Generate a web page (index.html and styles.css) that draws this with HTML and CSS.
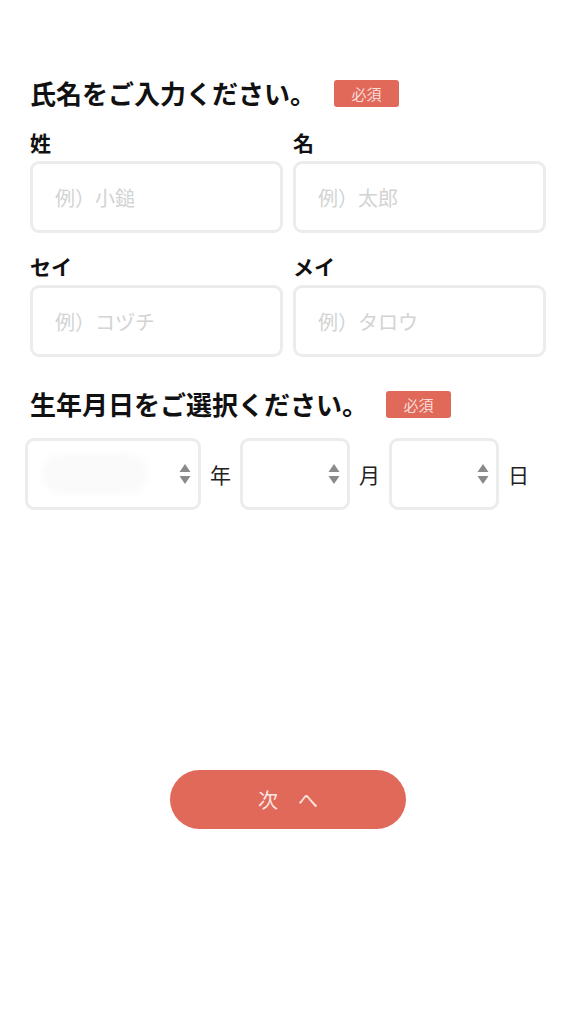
FILE: index.html
```html
<!DOCTYPE html>
<html lang="ja">
<head>
  <meta charset="UTF-8" />
  <meta name="viewport" content="width=device-width, initial-scale=1" />
  <title>お客様情報の入力</title>
  <link rel="stylesheet" href="styles.css">
</head>
<body>
  <main class="form">
    <div class="heading">
      <h2>氏名をご入力ください。</h2>
      <span class="badge">必須</span>
    </div>
    <div class="pair">
      <label class="field">
        <span class="label">姓</span>
        <input type="text" placeholder="例）小鎚" />
      </label>
      <label class="field">
        <span class="label">名</span>
        <input type="text" placeholder="例）太郎" />
      </label>
    </div>
    <div class="pair second">
      <label class="field">
        <span class="label">セイ</span>
        <input type="text" placeholder="例）コヅチ" />
      </label>
      <label class="field">
        <span class="label">メイ</span>
        <input type="text" placeholder="例）タロウ" />
      </label>
    </div>

    <div class="heading birth">
      <h2>生年月日をご選択ください。</h2>
      <span class="badge">必須</span>
    </div>
    <div class="date-row">
      <div class="select year">
        <span class="blank"></span>
        <svg class="arrows" width="12" height="22" viewBox="0 0 12 22"><path d="M6 1 L11.5 9 H0.5 Z" fill="#8a8a8a"/><path d="M6 21 L11.5 13 H0.5 Z" fill="#8a8a8a"/></svg>
      </div>
      <span class="unit">年</span>
      <div class="select">
        <svg class="arrows" width="12" height="22" viewBox="0 0 12 22"><path d="M6 1 L11.5 9 H0.5 Z" fill="#8a8a8a"/><path d="M6 21 L11.5 13 H0.5 Z" fill="#8a8a8a"/></svg>
      </div>
      <span class="unit">月</span>
      <div class="select">
        <svg class="arrows" width="12" height="22" viewBox="0 0 12 22"><path d="M6 1 L11.5 9 H0.5 Z" fill="#8a8a8a"/><path d="M6 21 L11.5 13 H0.5 Z" fill="#8a8a8a"/></svg>
      </div>
      <span class="unit">日</span>
    </div>

    <div class="actions">
      <button type="button" class="next">次　へ</button>
    </div>
  </main>
</body>
</html>
```

FILE: styles.css
```css
body {
  margin: 0;
  background: #fff;
  color: #111;
  font-family: "Noto Sans CJK JP", "Noto Sans", sans-serif;
}
.form {
  padding: 75px 30px 0 30px;
}
.heading {
  display: flex;
  align-items: center;
  height: 36px;
}
.heading h2 {
  margin: 0;
  font-size: 26px;
  font-weight: 700;
  line-height: 36px;
  letter-spacing: 0;
}
.badge {
  margin-left: 18px;
  width: 65px;
  height: 27px;
  border-radius: 3px;
  background: #e1695a;
  color: #f9dcd7;
  font-size: 15px;
  line-height: 27px;
  text-align: center;
}
.pair {
  display: grid;
  grid-template-columns: 253px 253px;
  column-gap: 10px;
  margin-top: 16px;
}
.pair.second {
  margin-top: 18px;
}
.field {
  display: flex;
  flex-direction: column;
}
.label {
  font-size: 21px;
  font-weight: 700;
  line-height: 30px;
  margin-bottom: 4px;
}
.field input {
  box-sizing: border-box;
  height: 72px;
  width: 100%;
  border: 3px solid #ececec;
  border-radius: 9px;
  padding: 0 0 0 22px;
  font-family: inherit;
  font-size: 20px;
  color: #333;
  outline: none;
}
.field input::placeholder {
  color: #d3d3d3;
}
.heading.birth {
  margin-top: 29px;
}
.date-row {
  display: flex;
  align-items: center;
  margin-top: 16px;
  margin-left: -5px;
}
.select {
  box-sizing: border-box;
  width: 110px;
  height: 72px;
  border: 3px solid #ececec;
  border-radius: 9px;
  display: flex;
  align-items: center;
  justify-content: flex-end;
  padding-right: 7px;
}
.select.year {
  width: 176px;
  justify-content: space-between;
  padding-left: 14px;
}
.blank {
  width: 106px;
  height: 40px;
  border-radius: 20px;
  background: #fafafa;
  filter: blur(3px);
}
.unit {
  font-size: 21px;
  line-height: 30px;
  color: #222;
  margin: 0 9px 0 9px;
}
.actions {
  display: flex;
  justify-content: center;
  margin-top: 260px;
}
.next {
  width: 236px;
  height: 59px;
  border: none;
  border-radius: 30px;
  background: #e1695a;
  color: #fbe8e4;
  font-family: inherit;
  font-size: 20px;
  cursor: pointer;
}
```
